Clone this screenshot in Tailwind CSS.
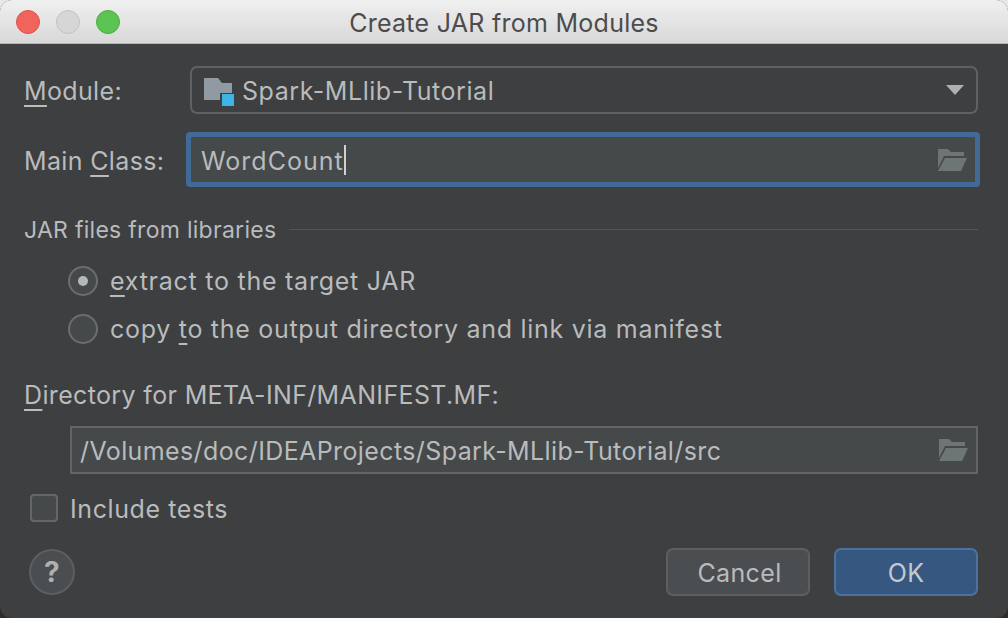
<!DOCTYPE html>
<html lang="en">
<head>
    <meta charset="UTF-8">
    <title>Create JAR from Modules</title>
    <script src="https://cdn.jsdelivr.net/npm/@tailwindcss/browser@4"></script>
</head>
<body class="h-[618px] bg-linear-to-b from-[#e8e8e8] from-[6%] to-[#2c2c2c] to-[7%] overflow-hidden">
<div class="w-[1008px] h-[618px] bg-[#3d3f41] rounded-[12px] overflow-hidden font-['Inter',sans-serif] text-[25px] leading-[30px] text-[#b9bbbd] tracking-[0.35px] flex flex-col">

    <!-- title bar -->
    <div class="h-[44px] shrink-0 bg-gradient-to-b from-[#f0f0f0] to-[#d8d8d8] border-b border-[#b4b4b4] flex items-center relative">
        <div class="flex gap-[16px] pl-[16px]">
            <div class="w-[24px] h-[24px] rounded-full bg-[#f0645c] border border-[#e0524a]"></div>
            <div class="w-[24px] h-[24px] rounded-full bg-[#d6d6d6] border border-[#c2c2c2]"></div>
            <div class="w-[24px] h-[24px] rounded-full bg-[#5cc453] border border-[#4cae44]"></div>
        </div>
        <div class="absolute inset-0 flex items-center justify-center text-[#4c4c4c] pt-[2px] tracking-[0.27px]">Create JAR from Modules</div>
    </div>

    <div class="flex-1 flex flex-col pr-[30px] pl-[24px]">
        <!-- module -->
        <div class="flex items-center h-[48px] mt-[22px]">
            <span class="w-[166px] pt-[2px]"><u class="underline-offset-[5px] decoration-[2px]">M</u>odule:</span>
            <div class="flex-1 h-[48px] border-2 border-[#5f6163] rounded-[7px] flex items-center pl-[12px] pr-[12px]">
                <svg width="40" height="32" viewBox="0 0 40 32" class="shrink-0 -ml-[1px]">
                    <path d="M1 4h14l4 5h10v17H1z" fill="#8f9aa3"/>
                    <rect x="17" y="19" width="15" height="13" fill="#3d3f41"/>
                    <rect x="19" y="20" width="12" height="12" fill="#3db4e6"/>
                </svg>
                <span class="-ml-[1px] flex-1 pt-[2px] tracking-[0.55px]">Spark-MLlib-Tutorial</span>
                <svg width="18" height="10" viewBox="0 0 18 10"><path d="M0 0h18l-9 10z" fill="#aeb0b2"/></svg>
            </div>
        </div>

        <!-- main class -->
        <div class="flex items-center h-[55px] mt-[18px] -mr-[2px]">
            <span class="w-[162px] pt-[2px]">Main <u class="underline-offset-[5px] decoration-[2px]">C</u>lass:</span>
            <div class="flex-1 h-[55px] border-[5px] border-[#416a96] rounded-[4px] bg-[#45494a] flex items-center pl-[10px] pr-[8px]">
                <span class="flex-1 flex items-center tracking-[1px]"><span class="pt-[2px]">WordCount</span><span class="w-[2px] h-[30px] bg-[#d0d0d0]"></span></span>
                <svg width="30" height="24" viewBox="0 0 30 24"><path d="M1 1h10l3 3h13v4H7L1 20z" fill="#6d7577"/><path d="M8 10h22l-6 13H1z" fill="#6d7577"/></svg>
            </div>
        </div>

        <!-- separator -->
        <div class="flex items-center gap-[13px] mt-[27px] h-[30px]">
            <span class="text-[23px] tracking-[0.28px] pt-[2px]">JAR files from libraries</span>
            <div class="flex-1 h-[1px] bg-[#535557]"></div>
        </div>

        <!-- radios -->
        <div class="flex items-center gap-[12px] pl-[44px] mt-[22px] h-[30px]">
            <div class="w-[30px] h-[30px] rounded-full border-2 border-[#6b6d6f] bg-[#45494a] flex items-center justify-center">
                <div class="w-[10px] h-[10px] rounded-full bg-[#b4b8ba]"></div>
            </div>
            <span class="tracking-[0.75px]"><u class="underline-offset-[5px] decoration-[2px]">e</u>xtract to the target JAR</span>
        </div>
        <div class="flex items-center gap-[12px] pl-[44px] mt-[18px] h-[30px]">
            <div class="w-[30px] h-[30px] rounded-full border-2 border-[#6b6d6f] bg-[#45494a]"></div>
            <span class="tracking-[0.71px]">copy <u class="underline-offset-[5px] decoration-[2px]">t</u>o the output directory and link via manifest</span>
        </div>

        <!-- directory -->
        <div class="mt-[36px] h-[30px]"><u class="underline-offset-[5px] decoration-[2px]">D</u>irectory for META-INF/MANIFEST.MF:</div>
        <div class="ml-[46px] mt-[16px] h-[48px] border-2 border-[#626466] bg-[#45494a] flex items-center pl-[8px] pr-[8px]">
            <span class="flex-1 pt-[2px] tracking-[0.39px]">/Volumes/doc/IDEAProjects/Spark-MLlib-Tutorial/src</span>
            <svg width="30" height="24" viewBox="0 0 30 24"><path d="M1 1h10l3 3h13v4H7L1 20z" fill="#6d7577"/><path d="M8 10h22l-6 13H1z" fill="#6d7577"/></svg>
        </div>

        <!-- include tests -->
        <div class="flex items-center gap-[12px] pl-[6px] mt-[20px] h-[28px]">
            <div class="w-[28px] h-[28px] rounded-[4px] border-2 border-[#646668] bg-[#45494a]"></div>
            <span class="pt-[2px] tracking-[0.6px]">Include tests</span>
        </div>

        <!-- footer -->
        <div class="flex items-center mt-[26px] h-[48px]">
            <div class="ml-[5px] w-[46px] h-[46px] rounded-full border-2 border-[#5c5f61] bg-[#4a4e50] flex items-center justify-center font-bold text-[28px] text-[#aeb0b2]">?</div>
            <div class="ml-auto flex gap-[24px]">
                <div class="w-[144px] h-[48px] rounded-[7px] border-2 border-[#5c5f61] bg-[#4a4e50] flex items-center justify-center pt-[2px] pl-[3px]">Cancel</div>
                <div class="w-[144px] h-[48px] rounded-[7px] border-2 border-[#4a739f] bg-[#365880] flex items-center justify-center pt-[2px] text-[#c5c9cd]">OK</div>
            </div>
        </div>
    </div>
</div>
</body>
</html>
